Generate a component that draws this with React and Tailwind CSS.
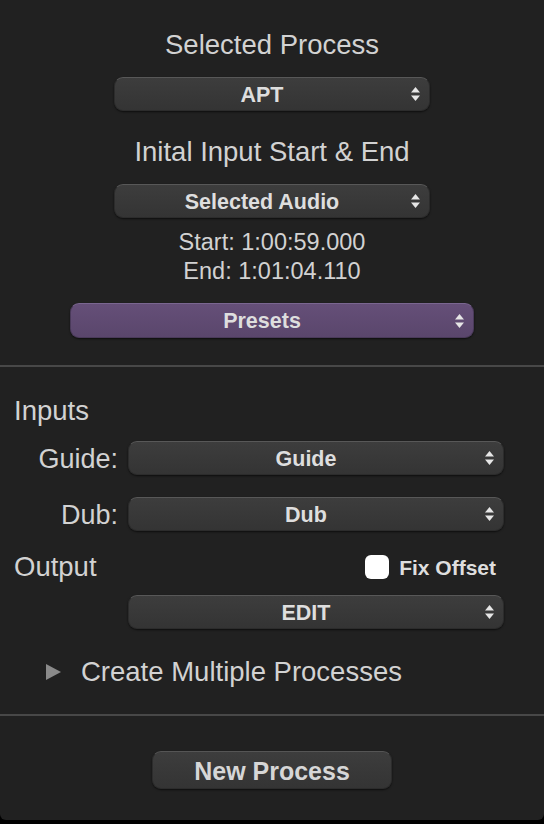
import React from 'react';

// Up/down stepper arrows shown at the right edge of each popup button
function Arrows() {
  return (
    <svg width="11" height="16" viewBox="0 0 11 16" className="shrink-0">
      <path d="M5.5 1 L10 6.5 L1 6.5 Z" fill="#e6e6e6" />
      <path d="M5.5 15 L10 9.5 L1 9.5 Z" fill="#e6e6e6" />
    </svg>
  );
}

function Popup({ label, className = '', purple = false }) {
  const tone = purple
    ? 'bg-gradient-to-b from-[#654f78] to-[#5a466c] border-[#4a3a5a] border-t-[#7a6690]'
    : 'bg-gradient-to-b from-[#3d3d3d] to-[#343434] border-[#2c2c2c] border-t-[#585858]';
  return (
    <div
      className={`relative flex items-center justify-center pr-[20px] rounded-[9px] border shadow-[0_1px_2px_rgba(0,0,0,0.6)] ${tone} ${className}`}
    >
      <span className="pt-[3px] text-[21.5px] leading-none font-bold text-[#dedede]">{label}</span>
      <div className="absolute right-[8px] top-1/2 -translate-y-1/2 flex">
        <Arrows />
      </div>
    </div>
  );
}

export default function App() {
  return (
    <div
      className="w-[544px] h-[824px] bg-black"
      style={{ fontFamily: '"Liberation Sans", Arial, sans-serif' }}
    >
      <div className="w-[544px] h-[820px] bg-[#212121] rounded-b-[6px] flex flex-col">
        {/* Process selection */}
        <div className="flex flex-col items-center pt-[29px]">
          <div className="h-[32px] leading-[32px] text-[27.5px] text-[#d2d2d2]">Selected Process</div>
          <Popup label="APT" className="mt-[16px] w-[316px] h-[34px]" />
          <div className="mt-[25px] h-[32px] leading-[32px] text-[27.5px] text-[#d2d2d2]">Inital Input Start &amp; End</div>
          <Popup label="Selected Audio" className="mt-[16px] w-[316px] h-[34px]" />
          <div className="mt-[10px] h-[29px] leading-[29px] text-[23.5px] text-[#d2d2d2]">Start: 1:00:59.000</div>
          <div className="h-[29px] leading-[29px] text-[23.5px] text-[#d2d2d2]">End: 1:01:04.110</div>
          <Popup label="Presets" purple className="mt-[17px] w-[404px] h-[35px]" />
        </div>

        <div className="mt-[27px] h-[2px] bg-[#484848]" />

        {/* Inputs / output */}
        <div className="flex flex-col px-[14px]">
          <div className="mt-[28px] h-[32px] leading-[32px] text-[27.5px] text-[#d2d2d2]">Inputs</div>
          <div className="mt-[14px] h-[34px] flex items-center gap-[10px]">
            <div className="w-[104px] pt-[2px] leading-[32px] text-right text-[27px] text-[#d2d2d2]">Guide:</div>
            <Popup label="Guide" className="w-[376px] h-[34px]" />
          </div>
          <div className="mt-[22px] h-[34px] flex items-center gap-[10px]">
            <div className="w-[104px] pt-[2px] leading-[32px] text-right text-[27px] text-[#d2d2d2]">Dub:</div>
            <Popup label="Dub" className="w-[376px] h-[34px]" />
          </div>
          <div className="mt-[20px] h-[32px] flex items-center justify-between">
            <span className="leading-[32px] text-[27.5px] text-[#d2d2d2]">Output</span>
            <div className="flex items-center gap-[10px] mr-[34px]">
              <div className="w-[24px] h-[24px] rounded-[6px] bg-white" />
              <span className="leading-none text-[21px] font-bold text-[#dedede]">Fix Offset</span>
            </div>
          </div>
          <Popup label="EDIT" className="mt-[12px] ml-[114px] w-[376px] h-[34px]" />
          <div className="mt-[27px] h-[32px] flex items-center">
            <svg width="15" height="16" viewBox="0 0 15 16" className="ml-[32px]">
              <path d="M0 0 L15 8 L0 16 Z" fill="#8a8a8a" />
            </svg>
            <span className="ml-[20px] leading-[32px] text-[27.5px] text-[#d2d2d2]">Create Multiple Processes</span>
          </div>
        </div>

        <div className="mt-[26px] h-[2px] bg-[#484848]" />

        <div className="flex justify-center">
          <div className="mt-[35px] w-[240px] h-[38px] flex items-center justify-center rounded-[9px] border border-[#2c2c2c] border-t-[#555555] bg-gradient-to-b from-[#3d3d3d] to-[#343434] shadow-[0_1px_2px_rgba(0,0,0,0.6)]">
            <span className="pt-[3px] leading-none text-[25px] font-bold text-[#d6d6d6]">New Process</span>
          </div>
        </div>
      </div>
    </div>
  );
}
